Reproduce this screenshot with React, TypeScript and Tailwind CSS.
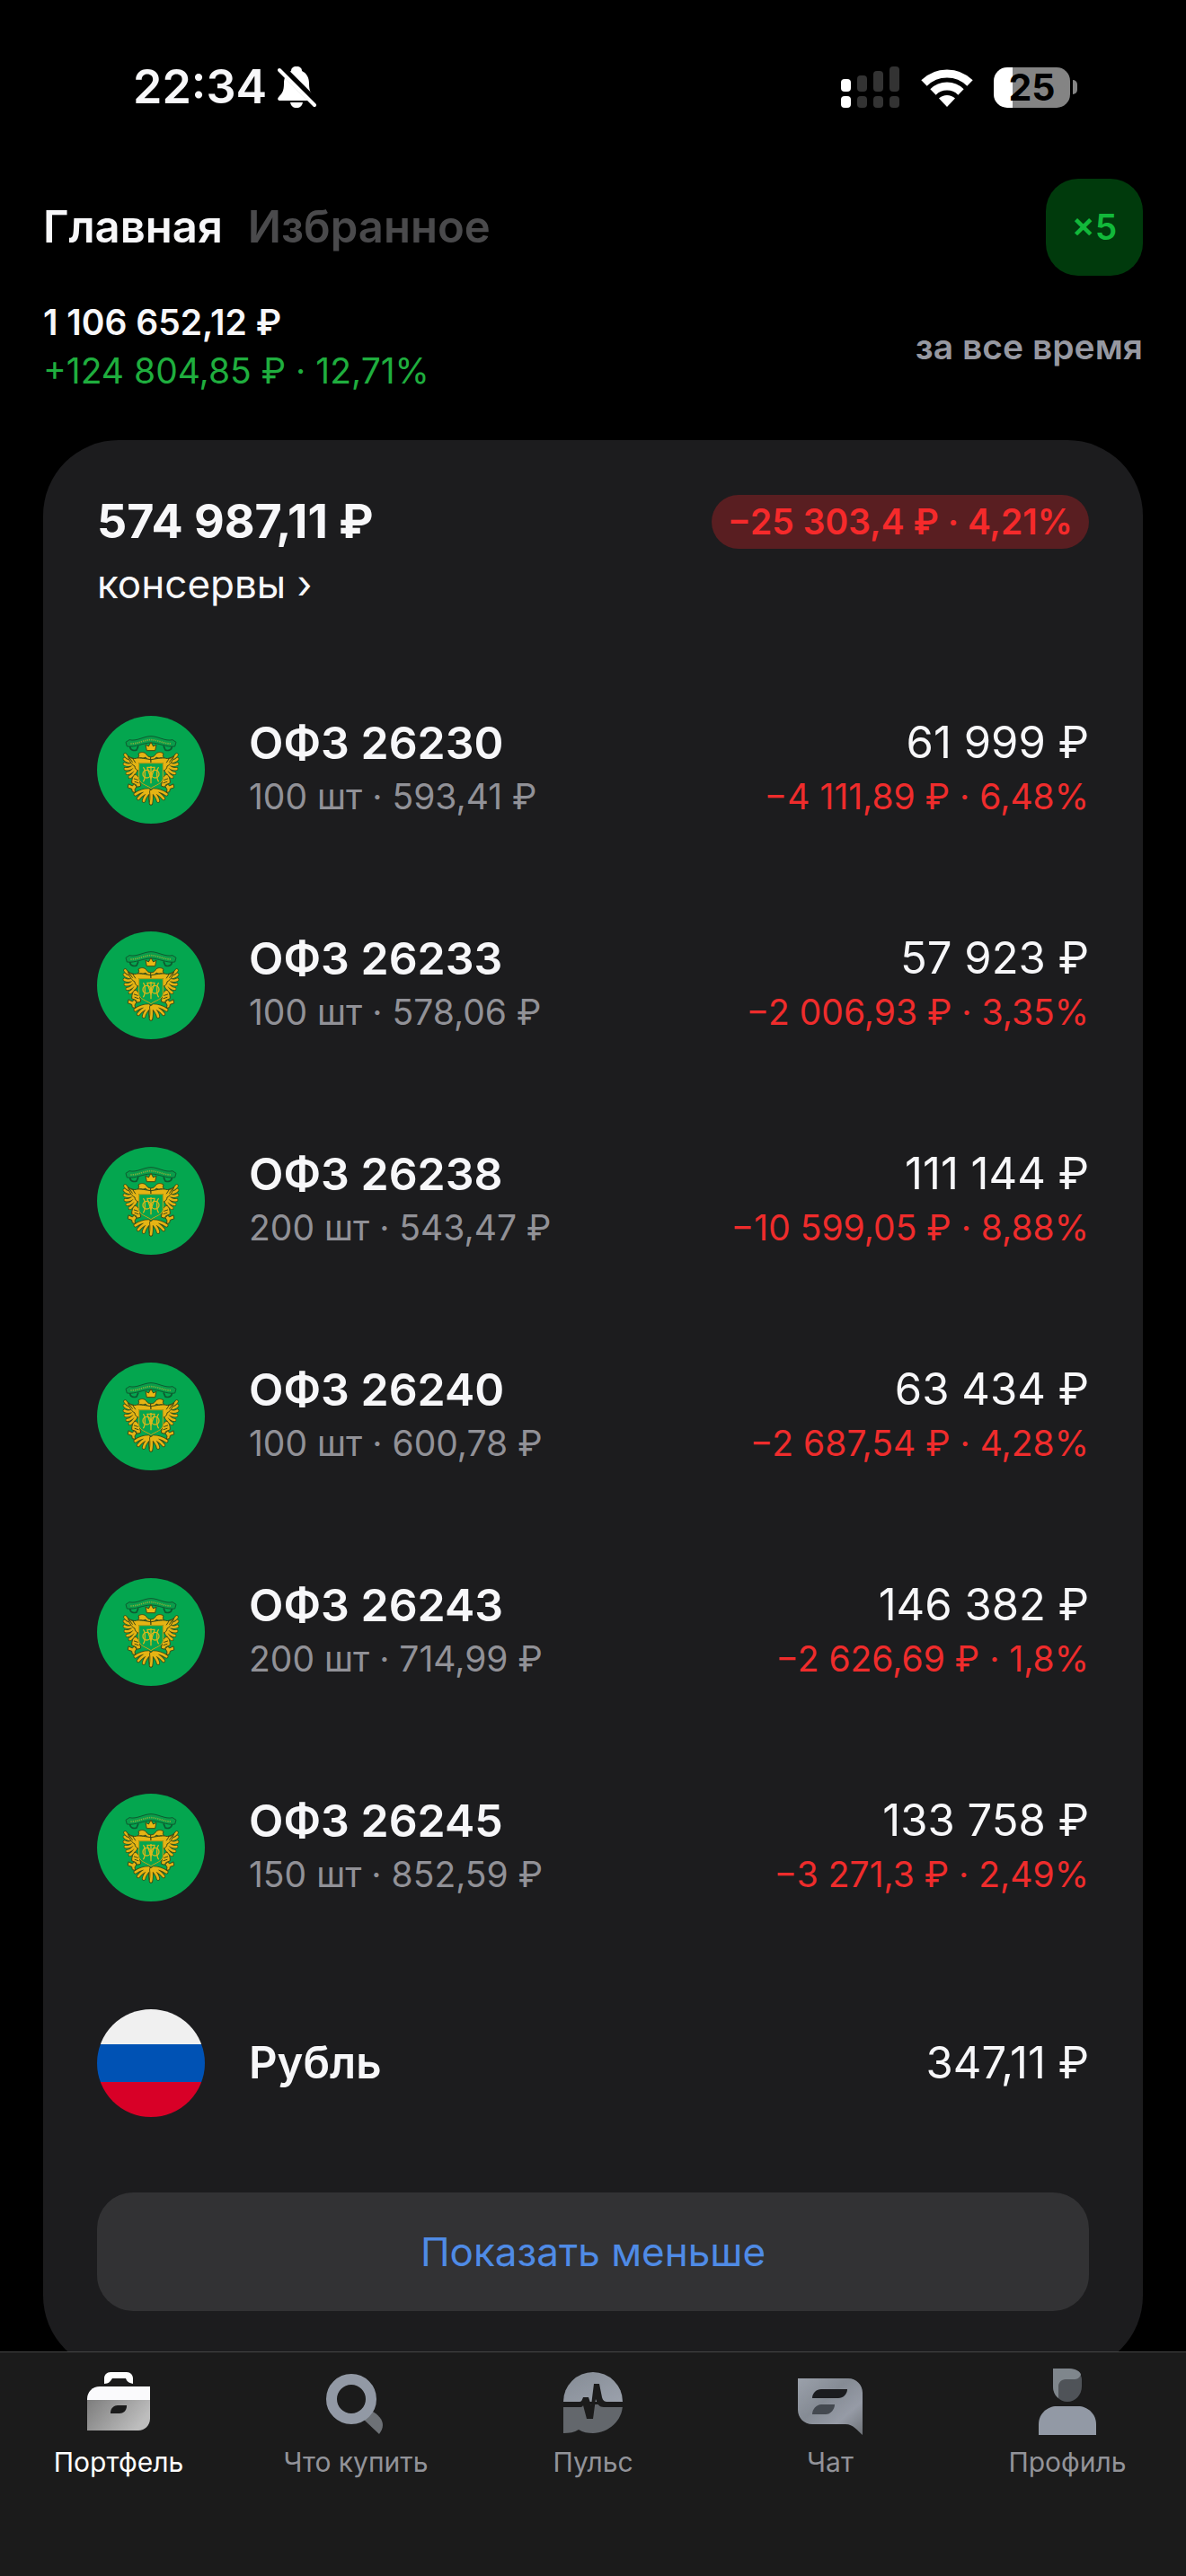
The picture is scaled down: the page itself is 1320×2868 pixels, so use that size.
import { useState } from 'react';
import type { ReactNode } from 'react';

type TabId = 'portfolio' | 'invest' | 'pulse' | 'chat' | 'profile';

interface Bond {
  name: string;
  amount: string;
  total: string;
  change: string;
}

const bonds: Bond[] = [
  { name: 'ОФЗ 26230', amount: '100 шт · 593,41 ₽', total: '61 999 ₽', change: '−4 111,89 ₽ · 6,48%' },
  { name: 'ОФЗ 26233', amount: '100 шт · 578,06 ₽', total: '57 923 ₽', change: '−2 006,93 ₽ · 3,35%' },
  { name: 'ОФЗ 26238', amount: '200 шт · 543,47 ₽', total: '111 144 ₽', change: '−10 599,05 ₽ · 8,88%' },
  { name: 'ОФЗ 26240', amount: '100 шт · 600,78 ₽', total: '63 434 ₽', change: '−2 687,54 ₽ · 4,28%' },
  { name: 'ОФЗ 26243', amount: '200 шт · 714,99 ₽', total: '146 382 ₽', change: '−2 626,69 ₽ · 1,8%' },
  { name: 'ОФЗ 26245', amount: '150 шт · 852,59 ₽', total: '133 758 ₽', change: '−3 271,3 ₽ · 2,49%' },
];

function BellOffIcon() {
  return (
    <svg className="w-11 h-12" viewBox="0 0 44 48" fill="none">
      <path
        d="M21 1c-4 0-6 2-6 5C9 9 7 14 7 20c0 8-2 11-5 14-3 3-2 5 1 5h36c3 0 4-2 1-5-3-3-5-6-5-14 0-6-2-11-8-14 0-3-2-5-6-5Z"
        fill="#fff"
      />
      <path d="M14 41h14c-1 4-3 6-7 6s-6-2-7-6Z" fill="#fff" />
      <path d="M4 3l40 40" stroke="#000" strokeWidth="9" />
      <path d="M2 5l39 39" stroke="#fff" strokeWidth="4" strokeLinecap="round" />
    </svg>
  );
}

function SignalIcon() {
  return (
    <svg className="w-[66px] h-[46px]" viewBox="0 0 66 46">
      <g fill="#fff">
        <rect x="0" y="14" width="11" height="14" rx="4" />
        <rect x="0" y="33" width="11" height="13" rx="4" />
      </g>
      <g fill="#333">
        <rect x="18" y="10" width="11" height="18" rx="4" />
        <rect x="36" y="5" width="11" height="23" rx="4" />
        <rect x="54" y="0" width="11" height="28" rx="4" />
        <rect x="18" y="33" width="11" height="13" rx="4" />
        <rect x="36" y="33" width="11" height="13" rx="4" />
        <rect x="54" y="33" width="11" height="13" rx="4" />
      </g>
    </svg>
  );
}

function WifiIcon() {
  return (
    <svg className="w-[58px] h-[43px]" viewBox="0 0 58 43" fill="none">
      <path d="M3.500 16.500a36 36 0 0 1 51 0" stroke="#fff" strokeWidth="9" />
      <path d="M13.500 26.500a22 22 0 0 1 31 0" stroke="#fff" strokeWidth="9" />
      <path d="M29 43l-9-9.500a13 13 0 0 1 18 0Z" fill="#fff" />
    </svg>
  );
}

// one side of the double-headed eagle, the other side is its mirror image
function EagleHalf() {
  const feathers =
    'M150 184C138 182 124 176 118 166M150 190C136 190 122 188 116 180M150 196C138 200 124 202 116 197M150 202C140 210 128 216 119 213M152 208C144 220 134 228 125 228M156 214C150 226 142 236 134 240';
  const tail = 'M196 284C182 284 164 290 152 298M198 286C184 292 170 302 162 312M200 288C190 298 182 310 180 320M203 288C202 300 201 314 204 328';

  return (
    <g fill="none" strokeLinecap="round">
      <path d={feathers} stroke="#3f4a14" strokeWidth="12" />
      <path d={feathers} stroke="#e5b414" strokeWidth="8" />
      <path d={tail} stroke="#3f4a14" strokeWidth="13" />
      <path d={tail} stroke="#e5b414" strokeWidth="8" />
      <g fill="#e5b414" stroke="#3f4a14" strokeWidth="3">
        <path d="M204 184c-8 0-14-4-18-10-4 3-10 4-14 2l-12 2 4-8-2-8c8-6 20-6 26 2 4 6 6 8 16 10Z" />
        <path d="M128 172c8 6 18 8 26 6 10-3 24 0 50 4v12h-40v26c-8-2-14-8-14-16-8-4-18-14-22-32Z" />
        <path d="M150 232c8 0 14 8 16 18l4 20-12 4-4-8-14-6c0-12 2-24 10-28Z" />
        <path d="M130 264l12 6 6-6 8 8-6 10 2 10-10-2-2-10-12-4Z" />
      </g>
      <path d="M148 246l12 4M150 256l12 4M132 176l10 14M144 180l8 12" stroke="#3f4a14" strokeWidth="3" />
    </g>
  );
}

function Emblem() {
  return (
    <svg className="w-[120px] h-[120px] shrink-0" viewBox="24 36 360 360" fill="none">
      <circle cx="204" cy="216" r="180" fill="#04a64f" />
      <EagleHalf />
      <g transform="matrix(-1 0 0 1 408 0)">
        <EagleHalf />
      </g>
      <path d="M164 194h80v50c0 18-24 22-40 34-16-12-40-16-40-34Z" fill="#04a64f" stroke="#c9a414" strokeWidth="3" />
      <g stroke="#dcb81a" strokeWidth="4">
        <path d="M204 204v58M190 208h28" />
        <circle cx="190" cy="230" r="13" />
        <circle cx="218" cy="230" r="13" />
        <path d="M178 208c8 6 8 40 0 48M230 208c-8 6-8 40 0 48M192 210l12 34 12-34" />
      </g>
      <path d="M120 124l12-8c24 6 48-12 72-12s48 18 72 12l12 8-4 14c-28 4-54-12-80-12s-52 16-80 12Z" fill="#0a9d4a" stroke="#0d5a30" strokeWidth="3" />
      <path d="M134 138c0 12 12 16 22 12l6-14M274 138c0 12-12 16-22 12l-6-14" stroke="#0d5a30" strokeWidth="5" />
      <path d="M136 129c26 0 46-13 68-13s42 13 68 13" stroke="#7fae3c" strokeWidth="5" strokeDasharray="4 3" />
      <path d="M190 152l-4-20 10 6 8-14 8 14 10-6-4 20Z" fill="#e9b812" stroke="#3f4a14" strokeWidth="3" />
    </svg>
  );
}

function BriefcaseIcon() {
  return (
    <svg className="w-[72px] h-[72px]" viewBox="0 0 72 72">
      <defs>
        <linearGradient id="case" x1="0" y1="0" x2="1" y2="0.400">
          <stop offset="0" stopColor="#7d7d7d" />
          <stop offset="1" stopColor="#bdbdbd" />
        </linearGradient>
      </defs>
      <path d="M20 15V9c0-4 3-7 7-7h18c4 0 7 3 7 7v6c-5-1-7-3-8-6H29c-2 3-4 6-9 6Z" fill="#fff" />
      <path d="M1 33v-1c0-8 6-14 14-14h56v15Z" fill="#fafafc" />
      <path d="M1 33h70v21c0 7-6 13-13 13H1Z" fill="url(#case)" />
      <path d="M27 48v-1c0-5 4-8 8-8h10v1c0 5-4 8-8 8Z" fill="#1b1b1b" />
    </svg>
  );
}

function SearchIcon() {
  return (
    <svg className="w-[72px] h-[72px]" viewBox="0 0 72 72">
      <path d="M44 54l9-9c8 4 13 10 13 16 0 4-2 7-4 10Z" fill="#6d7176" />
      <circle cx="31" cy="32" r="22" fill="none" stroke="#9299a5" strokeWidth="12" />
    </svg>
  );
}

function PulseIcon() {
  return (
    <svg className="w-[72px] h-[72px]" viewBox="0 0 72 72">
      <defs>
        <linearGradient id="pulseTop" x1="0" y1="0" x2="1" y2="1">
          <stop offset="0" stopColor="#858c95" />
          <stop offset="1" stopColor="#9ba1ac" />
        </linearGradient>
      </defs>
      <path d="M3 35a33 33 0 0 1 66 0Z" fill="url(#pulseTop)" />
      <path d="M3 38h66c0 18-16 32-33 32-6 0-11-1-16-4-5 3-10 4-17 4Z" fill="#63676c" />
      <path
        d="M3 35h18c2 0 3-2 4-5h6l3 9 3-24h6l3 15c1 4 3 5 6 5h17v6H48c-5 0-7-3-9-9l-3 22h-7l-4-15c-1 2-2 2-4 2H3Z"
        fill="#1b1b1b"
      />
    </svg>
  );
}

function ChatIcon() {
  return (
    <svg className="w-[72px] h-[72px]" viewBox="0 0 72 72">
      <defs>
        <linearGradient id="chat" x1="0" y1="0" x2="1" y2="1">
          <stop offset="0" stopColor="#9ba1ab" />
          <stop offset="0.400" stopColor="#858b94" />
          <stop offset="0.700" stopColor="#969ba6" />
          <stop offset="1" stopColor="#6e7277" />
        </linearGradient>
      </defs>
      <path d="M0 9h56c9 0 16 7 16 16v47c-6-5-10-12-19-12H16C7 60 0 53 0 44Z" fill="url(#chat)" />
      <path d="M16 31c0-6 5-10 10-10h29c0 6-5 10-10 10Z" fill="#1b1c1f" />
      <path d="M16 49c0-6 5-11 10-11h15c0 6-5 11-10 11Z" fill="#444950" />
    </svg>
  );
}

function ProfileIcon() {
  return (
    <svg className="w-[72px] h-[72px]" viewBox="0 0 72 72" overflow="visible">
      <path d="M20-2h16c9 0 16 6 16 12v8a16 17 0 0 1-32 0Z" fill="#4f5358" />
      <path d="M20-2h18c8 0 13 4 13 7-2 4-4 5-8 5h-9c-5 0-8 4-8 8v13c-4-3-6-8-6-13Z" fill="#7f868c" />
      <path d="M4 72V60c0-12 10-20 20-20h24c10 0 20 8 20 20v12Z" fill="#9299a5" />
    </svg>
  );
}

const tabs: { id: TabId; label: string; icon: ReactNode }[] = [
  { id: 'portfolio', label: 'Портфель', icon: <BriefcaseIcon /> },
  { id: 'invest', label: 'Что купить', icon: <SearchIcon /> },
  { id: 'pulse', label: 'Пульс', icon: <PulseIcon /> },
  { id: 'chat', label: 'Чат', icon: <ChatIcon /> },
  { id: 'profile', label: 'Профиль', icon: <ProfileIcon /> },
];

function StatusBar() {
  return (
    <div className="flex items-center justify-between pt-16 pl-[148px] pr-[121px]">
      <div className="flex items-center gap-3">
        <span className="text-[52px] leading-[66px] font-semibold">22:34</span>
        <BellOffIcon />
      </div>
      <div className="flex items-center gap-[23px]">
        <SignalIcon />
        <WifiIcon />
        <div className="flex items-center gap-[3px]">
          <div className="w-[85px] h-[45px] rounded-[15px] bg-linear-to-r from-white from-25% to-[#848484] to-25% flex items-center justify-center text-black text-[41px] leading-[45px] font-bold">
            25
          </div>
          <div className="w-[5px] h-4 rounded-r-full bg-[#848484]" />
        </div>
      </div>
    </div>
  );
}

function BondRow({ bond }: { bond: Bond }) {
  return (
    <li className="flex items-center gap-[49px] h-60">
      <Emblem />
      <div className="flex-1 min-w-0">
        <div className="flex justify-between text-[50px] leading-[60px]">
          <span className="font-semibold">{bond.name}</span>
          <span className="text-[49px]">{bond.total}</span>
        </div>
        <div className="flex justify-between text-[39px] leading-[60px]">
          <span className="text-[#919197]">{bond.amount}</span>
          <span className="text-[#ef2c2c]">{bond.change}</span>
        </div>
      </div>
    </li>
  );
}

function App() {
  const [activeTab, setActiveTab] = useState<TabId>('portfolio');

  return (
    <div className="h-screen w-full flex flex-col overflow-hidden bg-black text-[#f7f7f9] font-['Inter','Liberation_Sans',sans-serif]">
      <StatusBar />

      <main className="flex-1 min-h-0 overflow-hidden px-12">
        <header className="flex items-center justify-between mt-[69px]">
          <div className="flex gap-7 text-[49px] leading-[60px] font-semibold">
            <button type="button">Главная</button>
            <button type="button" className="text-[#4a4a4c]">Избранное</button>
          </div>
          <button type="button" className="size-[108px] rounded-[36px] bg-[#003a0c] text-[#12b83a] text-[39px] font-semibold">
            ×5
          </button>
        </header>

        <section className="flex items-center justify-between mt-[25px] text-[39px] leading-[54px]">
          <div>
            <p className="font-semibold">1 106 652,12 ₽</p>
            <p className="text-[#1fae3e]">+124 804,85 ₽ · 12,71%</p>
          </div>
          <button type="button" className="font-semibold text-[#9698a1]">за все время</button>
        </section>

        <section className="mt-[50px] rounded-[84px] bg-[#1c1c1e] px-[60px] pt-[61px] pb-[67px]">
          <div className="flex items-center justify-between">
            <h1 className="text-[52px] leading-[60px] font-bold">574 987,11 ₽</h1>
            <span className="h-[60px] rounded-[30px] bg-[#591e21] px-[18px] text-[39px] leading-[60px] font-semibold text-[#f52a2b]">
              −25 303,4 ₽ · 4,21%
            </span>
          </div>
          <a href="#account" className="block w-fit mt-3 text-[44px] leading-[54px]">консервы ›</a>

          <ul className="mt-[60px]">
            {bonds.map((bond) => (
              <BondRow key={bond.name} bond={bond} />
            ))}
            <li className="flex items-center gap-[49px] h-60 text-[49px] leading-[60px]">
              <div className="size-[120px] shrink-0 rounded-full overflow-hidden flex flex-col">
                <div className="h-[39px] bg-[#f0f0f0]" />
                <div className="h-[42px] bg-[#0052b4]" />
                <div className="h-[39px] bg-[#d80027]" />
              </div>
              <span className="flex-1 font-semibold">Рубль</span>
              <span>347,11 ₽</span>
            </li>
          </ul>

          <button type="button" className="w-full h-[132px] mt-6 rounded-[40px] bg-[#323234] text-[44px] text-[#4f8be6]">
            Показать меньше
          </button>
        </section>
      </main>

      <nav className="h-[250px] shrink-0 flex border-t border-[#464646] bg-[#1b1b1b] pt-5">
        {tabs.map((tab) => (
          <button
            key={tab.id}
            type="button"
            onClick={() => setActiveTab(tab.id)}
            className={`flex-1 flex flex-col items-center gap-3 text-[30px] leading-9 ${activeTab === tab.id ? 'text-white' : 'text-[#929399]'}`}
          >
            {tab.icon}
            {tab.label}
          </button>
        ))}
      </nav>
    </div>
  );
}

export default App;
